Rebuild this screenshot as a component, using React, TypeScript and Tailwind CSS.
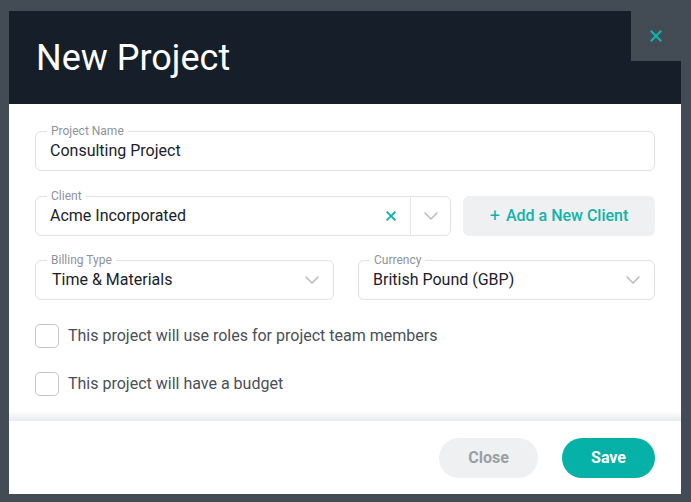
import React from "react";

const font = { fontFamily: "Roboto, 'Noto Sans', Arial, sans-serif" };

function Chevron() {
  return (
    <svg width="14" height="8" viewBox="0 0 14 8" fill="none">
      <path d="M1 1l6 6 6-6" stroke="#b9bdc3" strokeWidth="1.6" strokeLinecap="round" strokeLinejoin="round" />
    </svg>
  );
}

function XIcon({ size = 11, w = 2.2 }: { size?: number; w?: number }) {
  return (
    <svg width={size} height={size} viewBox="0 0 12 12" fill="none">
      <path d="M1.5 1.5l9 9M10.5 1.5l-9 9" stroke="#12b3a8" strokeWidth={w} strokeLinecap="square" />
    </svg>
  );
}

function Label({ children }: { children: React.ReactNode }) {
  return (
    <span className="absolute -top-[8px] left-[11px] bg-white px-[4px] text-[12px] leading-[14px] text-[#8d9298]">
      {children}
    </span>
  );
}

function Checkbox({ label }: { label: string }) {
  return (
    <label className="flex items-center gap-[9px]">
      <span className="h-[24px] w-[24px] rounded-[5px] border border-[#c3c6cb] bg-white" />
      <span className="text-[16px] leading-[20px] text-[#4a4f57]">{label}</span>
    </label>
  );
}

export default function App() {
  return (
    <div className="h-[502px] w-[691px] bg-[#434b55] pl-[9px] pt-[11px]" style={font}>
      <div className="flex h-[483px] w-[672px] flex-col bg-white">
        <div className="relative h-[93px] shrink-0 bg-[#151e29] pl-[27px] pt-[26px]">
          <h1 className="text-[36px] leading-[42px] font-normal text-white">New Project</h1>
          <button className="absolute right-0 top-0 flex h-[50px] w-[50px] items-center justify-center bg-[#434b55]">
            <XIcon size={12} w={2.2} />
          </button>
        </div>

        <div className="flex flex-1 flex-col px-[26px] pt-[27px]">
          <div className="relative flex h-[40px] items-center rounded-[6px] border border-[#dfe1e5] pl-[14px]">
            <Label>Project Name</Label>
            <span className="text-[16px] text-[#1b212b]">Consulting Project</span>
          </div>

          <div className="mt-[25px] flex gap-[12px]">
            <div className="relative flex h-[40px] w-[416px] items-center rounded-[6px] border border-[#dfe1e5]">
              <Label>Client</Label>
              <span className="flex-1 pl-[14px] text-[16px] text-[#1b212b]">Acme Incorporated</span>
              <span className="flex w-[30px] items-center justify-center pr-[8px]">
                <XIcon size={10} w={2.2} />
              </span>
              <span className="flex h-[38px] w-[40px] items-center justify-center border-l border-[#e3e5e8]">
                <Chevron />
              </span>
            </div>
            <button className="flex h-[40px] flex-1 items-center justify-center gap-[6px] rounded-[6px] bg-[#eef0f2] text-[16px] font-medium text-[#12b3a8]">
              <span className="text-[18px] font-normal leading-none">+</span>
              <span>Add a New Client</span>
            </button>
          </div>

          <div className="mt-[24px] flex gap-[24px]">
            <div className="relative flex h-[40px] flex-1 items-center justify-between rounded-[6px] border border-[#dfe1e5] pl-[16px] pr-[14px]">
              <Label>Billing Type</Label>
              <span className="text-[16px] text-[#1b212b]">Time &amp; Materials</span>
              <Chevron />
            </div>
            <div className="relative flex h-[40px] flex-1 items-center justify-between rounded-[6px] border border-[#dfe1e5] pl-[14px] pr-[14px]">
              <Label>Currency</Label>
              <span className="text-[16px] text-[#1b212b]">British Pound (GBP)</span>
              <Chevron />
            </div>
          </div>

          <div className="mt-[24px] flex flex-col gap-[24px]">
            <Checkbox label="This project will use roles for project team members" />
            <Checkbox label="This project will have a budget" />
          </div>

          <div className="flex-1" />
          <div className="-mx-[26px] h-[10px] bg-gradient-to-b from-white to-[#e8eaec]" />
        </div>

        <div className="flex h-[73px] shrink-0 items-center justify-end gap-[24px] pr-[26px]">
          <button className="h-[40px] w-[99px] rounded-full bg-[#eff0f2] text-[16px] font-bold text-[#9a9fa5]">Close</button>
          <button className="h-[40px] w-[93px] rounded-full bg-[#06b2a8] text-[16px] font-bold text-white">Save</button>
        </div>
      </div>
    </div>
  );
}
